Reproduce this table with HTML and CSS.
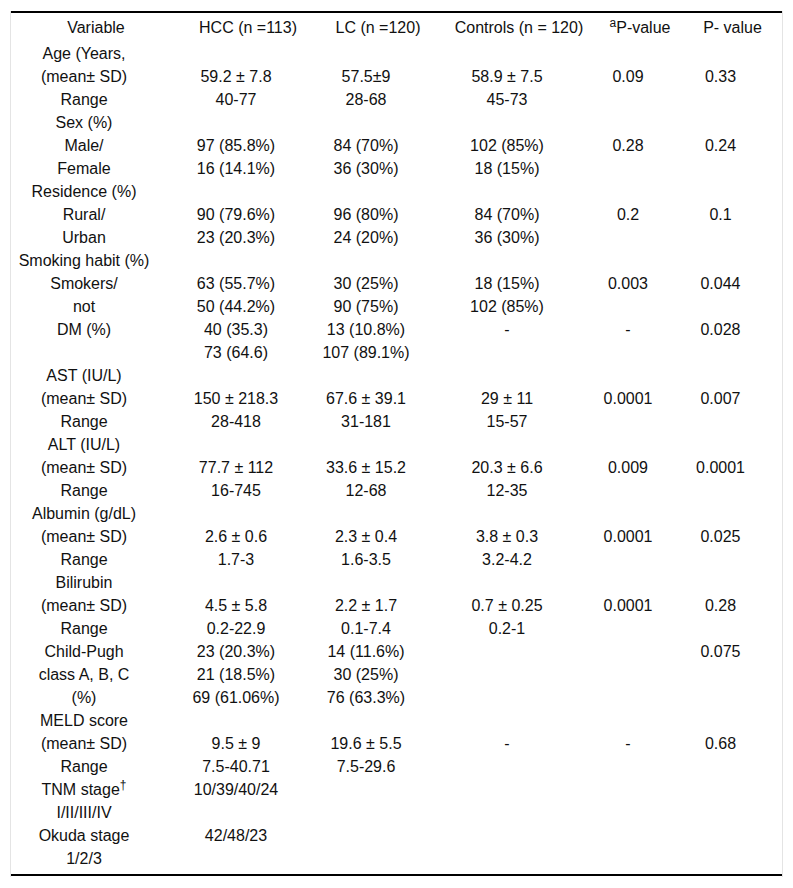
FILE: index.html
```html
<!DOCTYPE html>
<html lang="en">
<head>
<meta charset="utf-8">
<title>Table</title>
<link rel="stylesheet" href="styles.css">
</head>
<body>
<div class="wrap">
<table class="data">
<colgroup>
<col class="c1"><col class="c2"><col class="c3"><col class="c4"><col class="c5"><col class="c6">
</colgroup>
<thead>
<tr>
<th>Variable</th>
<th>HCC (n =113)</th>
<th>LC (n =120)</th>
<th>Controls (n = 120)</th>
<th><sup>a</sup>P-value</th>
<th>P- value</th>
</tr>
</thead>
<tbody>
<tr>
<td>Age (Years,<br>(mean± SD)<br>Range</td>
<td><br>59.2 ± 7.8<br>40-77</td>
<td><br>57.5±9<br>28-68</td>
<td><br>58.9 ± 7.5<br>45-73</td>
<td><br>0.09</td>
<td><br>0.33</td>
</tr>
<tr>
<td>Sex (%)<br>Male/<br>Female</td>
<td><br>97 (85.8%)<br>16 (14.1%)</td>
<td><br>84 (70%)<br>36 (30%)</td>
<td><br>102 (85%)<br>18 (15%)</td>
<td><br>0.28</td>
<td><br>0.24</td>
</tr>
<tr>
<td>Residence (%)<br>Rural/<br>Urban</td>
<td><br>90 (79.6%)<br>23 (20.3%)</td>
<td><br>96 (80%)<br>24 (20%)</td>
<td><br>84 (70%)<br>36 (30%)</td>
<td><br>0.2</td>
<td><br>0.1</td>
</tr>
<tr>
<td>Smoking habit (%)<br>Smokers/<br>not</td>
<td><br>63 (55.7%)<br>50 (44.2%)</td>
<td><br>30 (25%)<br>90 (75%)</td>
<td><br>18 (15%)<br>102 (85%)</td>
<td><br>0.003</td>
<td><br>0.044</td>
</tr>
<tr>
<td>DM (%)</td>
<td>40 (35.3)<br>73 (64.6)</td>
<td>13 (10.8%)<br>107 (89.1%)</td>
<td>-</td>
<td>-</td>
<td>0.028</td>
</tr>
<tr>
<td>AST (IU/L)<br>(mean± SD)<br>Range</td>
<td><br>150 ± 218.3<br>28-418</td>
<td><br>67.6 ± 39.1<br>31-181</td>
<td><br>29 ± 11<br>15-57</td>
<td><br>0.0001</td>
<td><br>0.007</td>
</tr>
<tr>
<td>ALT (IU/L)<br>(mean± SD)<br>Range</td>
<td><br>77.7 ± 112<br>16-745</td>
<td><br>33.6 ± 15.2<br>12-68</td>
<td><br>20.3 ± 6.6<br>12-35</td>
<td><br>0.009</td>
<td><br>0.0001</td>
</tr>
<tr>
<td>Albumin (g/dL)<br>(mean± SD)<br>Range</td>
<td><br>2.6 ± 0.6<br>1.7-3</td>
<td><br>2.3 ± 0.4<br>1.6-3.5</td>
<td><br>3.8 ± 0.3<br>3.2-4.2</td>
<td><br>0.0001</td>
<td><br>0.025</td>
</tr>
<tr>
<td>Bilirubin<br>(mean± SD)<br>Range</td>
<td><br>4.5 ± 5.8<br>0.2-22.9</td>
<td><br>2.2 ± 1.7<br>0.1-7.4</td>
<td><br>0.7 ± 0.25<br>0.2-1</td>
<td><br>0.0001</td>
<td><br>0.28</td>
</tr>
<tr>
<td>Child-Pugh<br>class A, B, C<br>(%)</td>
<td>23 (20.3%)<br>21 (18.5%)<br>69 (61.06%)</td>
<td>14 (11.6%)<br>30 (25%)<br>76 (63.3%)</td>
<td></td>
<td></td>
<td>0.075</td>
</tr>
<tr>
<td>MELD score<br>(mean± SD)<br>Range</td>
<td><br>9.5 ± 9<br>7.5-40.71</td>
<td><br>19.6 ± 5.5<br>7.5-29.6</td>
<td><br>-</td>
<td><br>-</td>
<td><br>0.68</td>
</tr>
<tr>
<td>TNM stage<sup>†</sup><br>I/II/III/IV</td>
<td>10/39/40/24</td>
<td></td>
<td></td>
<td></td>
<td></td>
</tr>
<tr class="last">
<td>Okuda stage<br>1/2/3</td>
<td>42/48/23</td>
<td></td>
<td></td>
<td></td>
<td></td>
</tr>
</tbody>
</table>
</div>
</body>
</html>
```

FILE: styles.css
```css
html, body {
  margin: 0;
  padding: 0;
  background: #ffffff;
}

body {
  font-family: "Liberation Sans", Arial, sans-serif;
  font-size: 16px;
  color: #111111;
}

.wrap {
  margin: 11px 0 0 10px;
  width: 771px;
  border-left: 1px solid #e4e4e4;
  border-right: 1px solid #e4e4e4;
  padding-bottom: 1px;
}

.data {
  width: 771px;
  table-layout: fixed;
  border-collapse: collapse;
  border-top: 2px solid #000000;
  border-bottom: 2px solid #000000;
}

.c1 { width: 170px; }
.c2 { width: 134px; }
.c3 { width: 126px; }
.c4 { width: 156px; }
.c5 { width: 86px; }
.c6 { width: 99px; }

.data th {
  font-weight: normal;
  text-align: center;
  line-height: 23px;
  padding: 3px 0 3px 0;
  white-space: nowrap;
}

.data td {
  text-align: center;
  vertical-align: top;
  line-height: 23px;
  padding: 0 24px 0 0;
  white-space: nowrap;
}

.data tr.last td {
  padding-bottom: 4px;
}

.data sup {
  font-size: 12px;
  line-height: 0;
  vertical-align: 6px;
}
```
